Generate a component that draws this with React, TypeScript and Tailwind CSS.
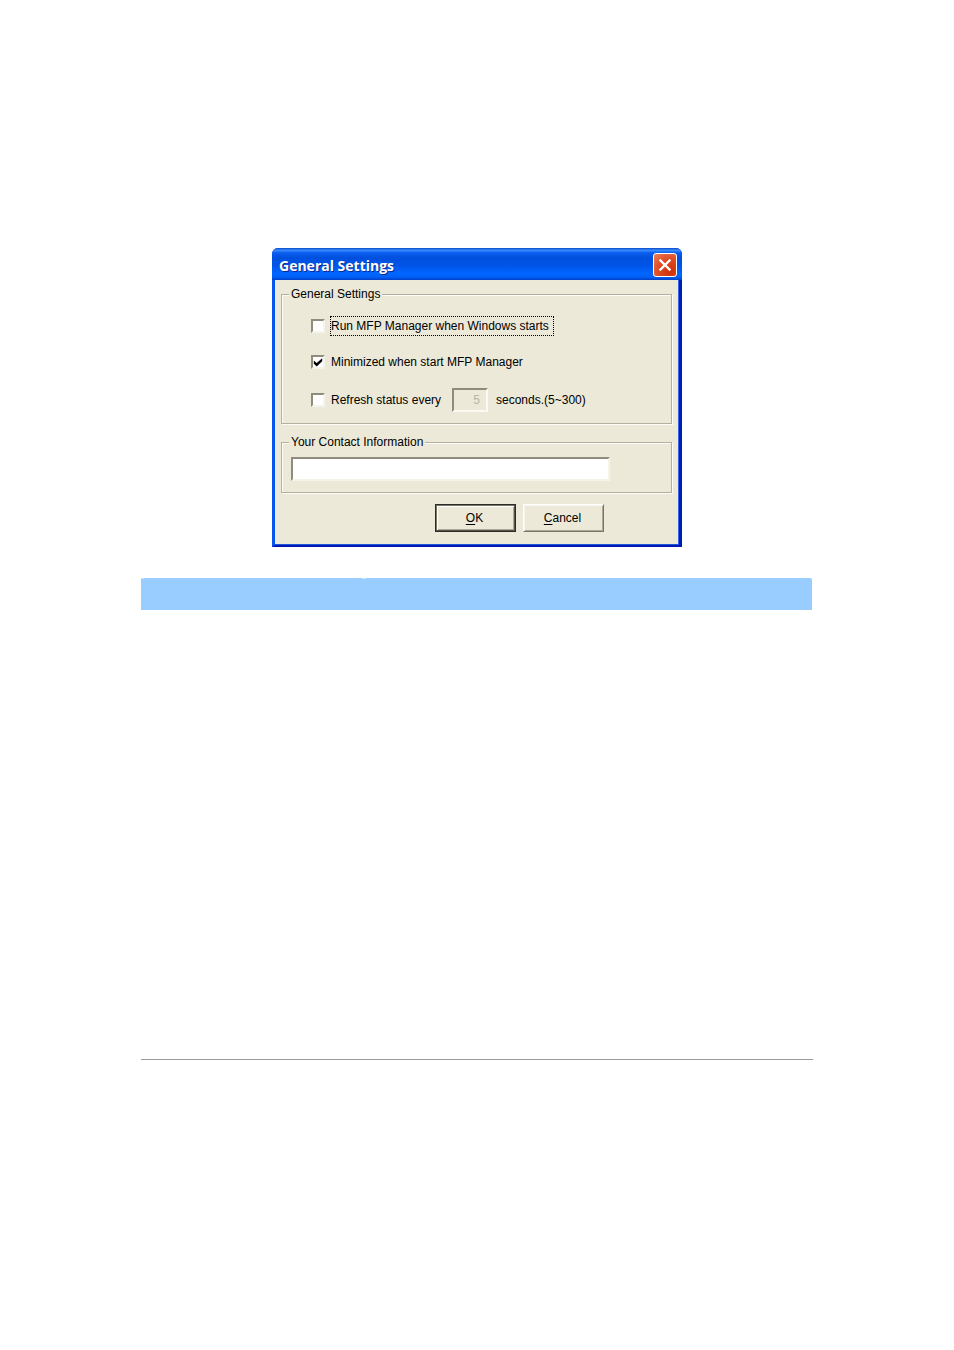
import { useState } from 'react';
import type { ReactNode } from 'react';

interface GroupBoxProps {
    title: string;
    children: ReactNode;
}

function GroupBox({ title, children }: GroupBoxProps) {
    return (
        <fieldset className="min-w-0 border border-[#b3b09f] px-[9px] pb-[11px] shadow-[1px_1px_0_#fdfcf6,inset_1px_1px_0_#fdfcf6]">
            <legend className="-ml-[2px] bg-[#ece9d8] px-[2px] leading-4">{title}</legend>
            {children}
        </fieldset>
    );
}

interface CheckBoxProps {
    id: string;
    checked: boolean;
    onChange: (checked: boolean) => void;
}

function CheckBox({ id, checked, onChange }: CheckBoxProps) {
    return (
        <span className="grid h-[14px] w-[14px] shrink-0">
            <input
                id={id}
                type="checkbox"
                checked={checked}
                onChange={(e) => onChange(e.target.checked)}
                className="col-start-1 row-start-1 h-[14px] w-[14px] appearance-none border-2 border-t-[#8f8c7e] border-r-[#f6f4ea] border-b-[#f6f4ea] border-l-[#8f8c7e] bg-white outline-none"
            />
            {checked && (
                <svg viewBox="0 0 14 14" className="pointer-events-none col-start-1 row-start-1 h-[14px] w-[14px]" aria-hidden="true">
                    <path d="M2.8 5.4 L5.7 8 L11.2 3.2 V6.2 L5.7 11.6 L2.8 8.7 Z" fill="#000" />
                </svg>
            )}
        </span>
    );
}

interface DialogButtonProps {
    label: string;
    isDefault?: boolean;
}

function DialogButton({ label, isDefault }: DialogButtonProps) {
    return (
        <button
            type="button"
            className={`h-7 w-[81px] border bg-[#ece9d8] pr-[2px] text-center ${
                isDefault
                    ? 'border-[#2c2b26] shadow-[inset_-1px_-1px_0_#55534a,inset_1px_1px_0_#77746a,inset_2px_2px_0_#fff,inset_-2px_-2px_0_#aca899]'
                    : 'border-t-white border-r-[#77746a] border-b-[#77746a] border-l-white shadow-[inset_1px_1px_0_#f8f6ec,inset_-1px_-1px_0_#aca899]'
            }`}
        >
            <span className="underline underline-offset-2">{label[0]}</span>
            {label.slice(1)}
        </button>
    );
}

export default function App() {
    const [runAtStart, setRunAtStart] = useState(false);
    const [minimized, setMinimized] = useState(true);
    const [refresh, setRefresh] = useState(false);
    const [contact, setContact] = useState('');

    return (
        <main className="min-h-screen bg-white px-[141px] pt-[248px] font-['Liberation_Sans',Arial,sans-serif] text-[12px] leading-4 text-black">
            <section aria-labelledby="dialog-title" className="mx-auto w-full max-w-[410px] rounded-t-[6px] bg-[#0831d9]">
                {/* Title bar */}
                <header className="flex h-8 items-center justify-between rounded-t-[6px] bg-[linear-gradient(to_bottom,#0a48c8_0%,#3a8cff_7%,#0a5ef0_15%,#0050dd_30%,#0055e8_55%,#0066ff_80%,#0062f8_90%,#0040c8_100%)] pt-[2px] pr-[5px] pl-[7px]">
                    <h1 id="dialog-title" className="pt-px font-['Open_Sans',sans-serif] text-[14px] leading-5 font-bold text-white [text-shadow:1px_1px_0_#0a2a90]">
                        General Settings
                    </h1>
                    <button type="button" aria-label="Close" className="flex h-6 w-6 items-center justify-center rounded-[3px] border border-white bg-[radial-gradient(circle_at_75%_80%,#cf3008_0%,#df4a22_50%,#ea8060_100%)]">
                        <svg viewBox="0 0 14 14" className="h-[14px] w-[14px]" aria-hidden="true">
                            <path d="M1.6 1.6 L12.4 12.4 M12.4 1.6 L1.6 12.4" stroke="#fff" strokeWidth="2.2" fill="none" />
                        </svg>
                    </button>
                </header>

                {/* Window frame and body */}
                <div className="border-x-[3px] border-b-2 border-r-[#0019b0] border-b-[#0019b0] border-l-[#0855ee] shadow-[inset_1px_0_0_#0831d9]">
                    <form className="border-r border-b border-r-[#2f6be8] border-b-[#1f55dd] bg-[#ece9d8] px-[6px] pt-[6px] pb-3" onSubmit={(e) => e.preventDefault()}>
                        <GroupBox title="General Settings">
                            <div className="flex flex-col gap-4 pt-[14px] pl-5">
                                <div className="flex h-5 items-center gap-[5px]">
                                    <CheckBox id="run" checked={runAtStart} onChange={setRunAtStart} />
                                    <label htmlFor="run" className="border border-dotted border-black pr-1 leading-[18px]">
                                        Run MFP Manager when Windows starts
                                    </label>
                                </div>
                                <div className="flex h-5 items-center gap-[6px]">
                                    <CheckBox id="minimized" checked={minimized} onChange={setMinimized} />
                                    <label htmlFor="minimized">Minimized when start MFP Manager</label>
                                </div>
                                <div className="flex h-6 items-center gap-[6px]">
                                    <CheckBox id="refresh" checked={refresh} onChange={setRefresh} />
                                    <label htmlFor="refresh" className="min-w-[115px]">Refresh status every</label>
                                    <input
                                        type="text"
                                        aria-label="Refresh interval in seconds"
                                        value="5"
                                        readOnly
                                        disabled={!refresh}
                                        className="h-6 w-9 border-2 border-t-[#8f8c7e] border-r-[#faf9f2] border-b-[#faf9f2] border-l-[#8f8c7e] bg-[#ece9d8] pr-[6px] text-right text-[#b8b5a5]"
                                    />
                                    <span className="pl-[2px]">seconds.(5~300)</span>
                                </div>
                            </div>
                        </GroupBox>

                        <div className="mt-[10px]">
                            <GroupBox title="Your Contact Information">
                                <div className="flex pt-[7px]">
                                    <input
                                        type="text"
                                        aria-label="Your Contact Information"
                                        value={contact}
                                        onChange={(e) => setContact(e.target.value)}
                                        className="h-6 w-full max-w-[319px] border-2 border-t-[#8f8c7e] border-r-[#f6f4ea] border-b-[#f6f4ea] border-l-[#8f8c7e] bg-white px-1 outline-none"
                                    />
                                </div>
                            </GroupBox>
                        </div>

                        <div className="mt-[11px] flex justify-end gap-[7px] pr-[68px]">
                            <DialogButton label="OK" isDefault />
                            <DialogButton label="Cancel" />
                        </div>
                    </form>
                </div>
            </section>

            {/* Section band */}
            <div className="mt-[31px] mr-px flex h-8 items-start bg-[#99ccff]">
                <span className="h-px w-[3px] bg-[#cce5ff]" />
                <span className="w-[32.5%]" />
                <span className="h-px w-1 bg-[#cce5ff]" />
                <span className="ml-auto h-px w-[2px] bg-[#cce5ff]" />
            </div>

            <hr className="mt-[449px] border-t border-[#999999]" />
        </main>
    );
}
